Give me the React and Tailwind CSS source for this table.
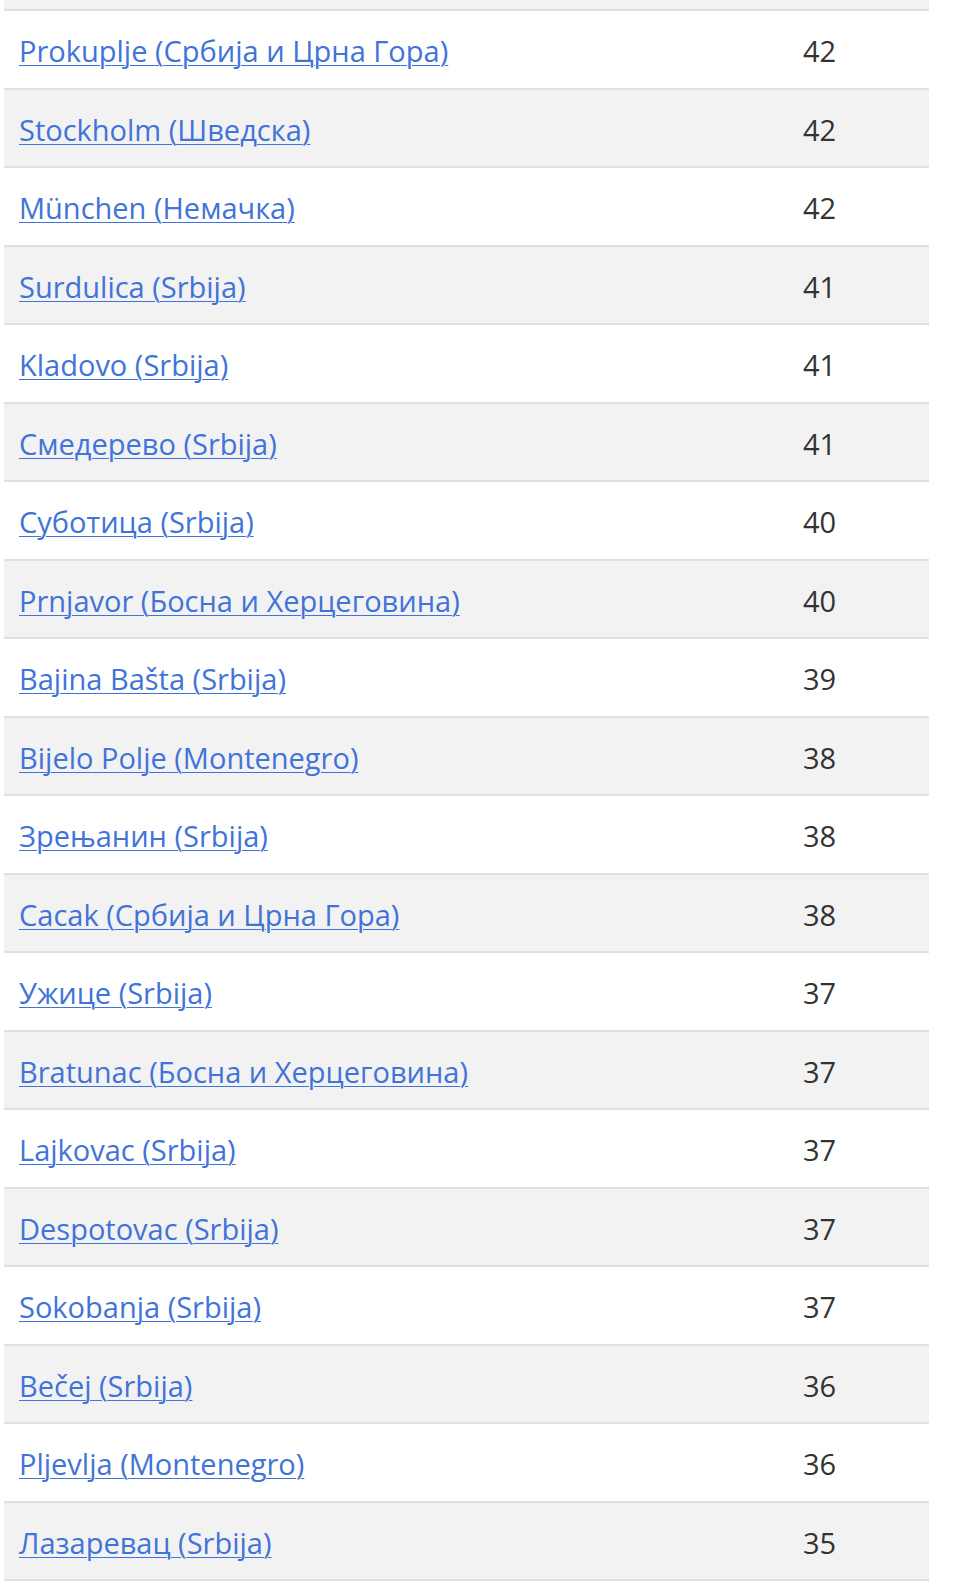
import React from "react"

const rows = [
    ["Prokuplje (Србија и Црна Гора)", 42],
    ["Stockholm (Шведска)", 42],
    ["München (Немачка)", 42],
    ["Surdulica (Srbija)", 41],
    ["Kladovo (Srbija)", 41],
    ["Смедерево (Srbija)", 41],
    ["Суботица (Srbija)", 40],
    ["Prnjavor (Босна и Херцеговина)", 40],
    ["Bajina Bašta (Srbija)", 39],
    ["Bijelo Polje (Montenegro)", 38],
    ["Зрењанин (Srbija)", 38],
    ["Cacak (Србија и Црна Гора)", 38],
    ["Ужице (Srbija)", 37],
    ["Bratunac (Босна и Херцеговина)", 37],
    ["Lajkovac (Srbija)", 37],
    ["Despotovac (Srbija)", 37],
    ["Sokobanja (Srbija)", 37],
    ["Bečej (Srbija)", 36],
    ["Pljevlja (Montenegro)", 36],
    ["Лазаревац (Srbija)", 35],
]

export default function App() {
    return (
        <div className="w-[960px] h-[1585px] bg-white overflow-hidden" style={{ fontFamily: '"Open Sans", "Noto Sans", sans-serif' }}>
            <div className="ml-[4px] w-[925px]">
                {/* cut-off row above */}
                <div className="h-[11px] bg-[#f2f2f2] border-b-2 border-[#e0e0e0]" />
                {rows.map(([name, n], i) => (
                    <div
                        key={name}
                        className={`h-[78.5px] flex items-center pt-[3px] border-b-2 border-[#e0e0e0] ${i % 2 ? "bg-[#f2f2f2]" : "bg-white"}`}
                    >
                        <a href="#" className="flex-1 pl-[15px] text-[29px] text-[#4173d8] underline underline-offset-[3px] decoration-1">
                            {name}
                        </a>
                        <span className="w-[126px] text-[29px] text-[#333]">{n}</span>
                    </div>
                ))}
            </div>
        </div>
    )
}
